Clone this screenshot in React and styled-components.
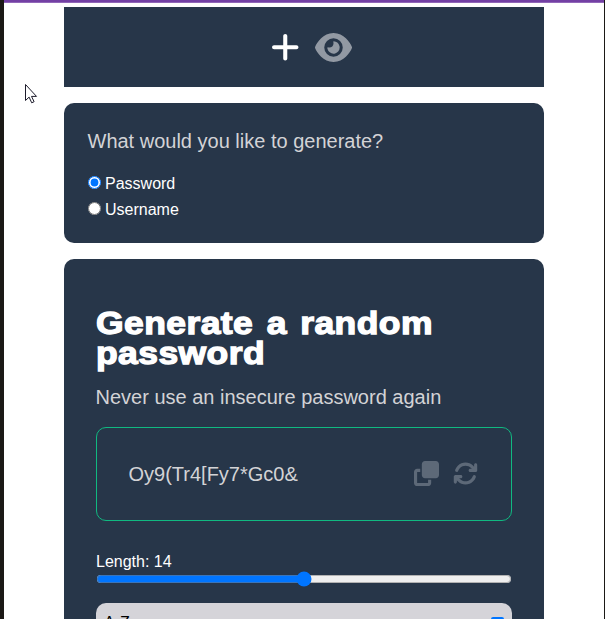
import React, { useState } from "react";
import styled, { createGlobalStyle } from "styled-components";
import { FaPlus, FaEye, FaClone, FaArrowsRotate } from "react-icons/fa6";

const GlobalStyle = createGlobalStyle`
  *, *::before, *::after { box-sizing: border-box; }
  body { margin: 0; background: #fff; overflow: hidden; }
`;

const Window = styled.div`
  position: relative;
  height: 619px;
  overflow: hidden;
  border-left: 4px solid #1b1916;
  border-right: 1px solid #1b1916;
  background: #fff;
  font-family: "Liberation Sans", Arial, sans-serif;
  font-size: 16px;
  color: #fff;
`;

const TopBar = styled.div`
  height: 3px;
  margin: 0 -1px 4px -4px;
  background: #7340a4;
  border-bottom: 1px solid #9166b8;
`;

const Column = styled.main`
  width: 480px;
  margin-left: 60px;
  display: flex;
  flex-direction: column;
  gap: 16px;
`;

const Nav = styled.nav`
  height: 80px;
  padding-left: 13px;
  display: flex;
  align-items: center;
  justify-content: center;
  gap: 14px;
  background: #273649;
  svg { display: block; }
`;

const NavButton = styled.span`
  font-size: ${(p) => p.$size}px;
  color: ${(p) => (p.$active ? "#fff" : "#9299a3")};
`;

const Card = styled.section`
  height: ${(p) => p.$height}px;
  padding: ${(p) => p.$padding};
  border-radius: 10px;
  background: #273649;
`;

const Lead = styled.p`
  margin: 0 0 0 -0.5px;
  font-size: 20px;
  line-height: 24px;
  color: #d3d3d6;
`;

const Options = styled.div`
  margin-top: 17px;
`;

const Option = styled.label`
  display: flex;
  align-items: center;
  height: 26px;
  padding-top: 1px;
  input { width: 13px; height: 13px; margin: 0 4px 3px 0; }
`;

const Title = styled.h1`
  width: 360px;
  margin: 0 0 17px;
  font-family: "Arial Black", "Liberation Sans", sans-serif;
  font-size: 32px;
  font-weight: 900;
  line-height: 30px;
  letter-spacing: 0.4px;
  word-spacing: 2.8px;
  transform: scaleX(1.108);
  transform-origin: left;
  -webkit-text-stroke: 1.3px #fff;
`;

const Output = styled.div`
  height: 94px;
  margin: 18px 0 31px;
  padding: 0 33px 0 31.5px;
  display: flex;
  align-items: center;
  border: 1px solid #10b981;
  border-radius: 10px;
  color: #d3d3d6;
  font-size: 20px;
`;

const Actions = styled.div`
  display: flex;
  gap: 14px;
  margin-left: auto;
  padding-bottom: 1px;
  color: #5d6978;
  font-size: 25px;
  svg { display: block; }
`;

const LengthLabel = styled.label`
  display: block;
  height: 19px;
  line-height: 20px;
`;

const Range = styled.input`
  display: block;
  width: 416px;
  height: 16px;
  margin: 0;
`;

const CharacterSet = styled.label`
  display: flex;
  justify-content: space-between;
  margin-top: 16px;
  padding: 10px 8px;
  height: 44px;
  border-radius: 10px;
  background: #d5d4d9;
  color: #000;
  line-height: 20px;
  input { width: 13px; height: 13px; margin: 4px 0 0; }
`;

const Pointer = styled.svg`
  position: absolute;
  left: 20px;
  top: 83px;
`;

export default function App() {
  const [kind, setKind] = useState("Password");
  const [length, setLength] = useState(14);
  return (
    <Window>
      <GlobalStyle />
      <TopBar />
      <Column>
        <Nav>
          <NavButton $active $size={32.5}><FaPlus /></NavButton>
          <NavButton $size={37}><FaEye /></NavButton>
        </Nav>
        <Card $height={140} $padding="26px 24px">
          <Lead>What would you like to generate?</Lead>
          <Options>
            {["Password", "Username"].map((name) => (
              <Option key={name}>
                <input type="radio" checked={kind === name} onChange={() => setKind(name)} />
                {name}
              </Option>
            ))}
          </Options>
        </Card>
        <Card $height={420} $padding="49px 32px">
          <Title>Generate a random password</Title>
          <Lead>Never use an insecure password again</Lead>
          <Output>
            Oy9(Tr4[Fy7*Gc0&amp;
            <Actions>
              <FaClone />
              <FaArrowsRotate />
            </Actions>
          </Output>
          <LengthLabel>Length: {length}</LengthLabel>
          <Range type="range" min="8" max="20" value={length} onChange={(e) => setLength(+e.target.value)} />
          <CharacterSet>
            A-Z
            <input type="checkbox" defaultChecked />
          </CharacterSet>
        </Card>
      </Column>
      <Pointer width="16" height="22" viewBox="0 0 16 22">
        <path d="M1.5 1.5v16l3.6-3.4 2.6 5.7 2.4-1.1-2.6-5.3h5z" fill="#fff" stroke="#1c1b2b" />
      </Pointer>
    </Window>
  );
}
